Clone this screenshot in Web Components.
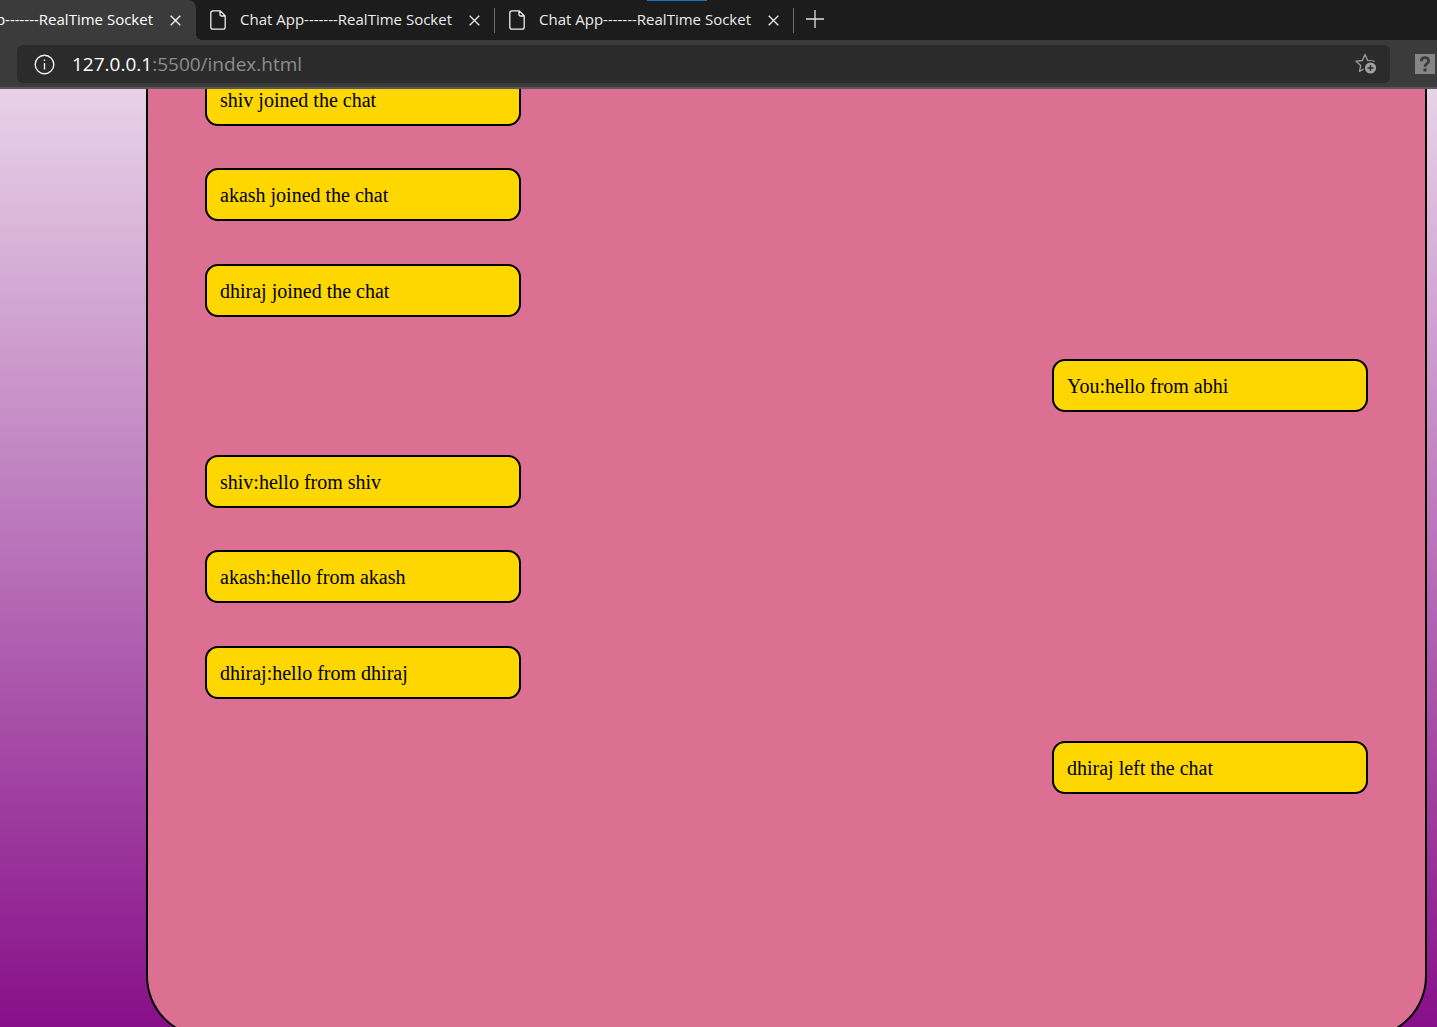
<!DOCTYPE html>
<html lang="en">
<head>
<meta charset="utf-8">
<title>Chat App-------RealTime Socket</title>
<style>
html, body { height: 100%; margin: 0; }
body { overflow: hidden; background: #1c1c1c; }
</style>
</head>
<body>
<app-window></app-window>
<script>
const define = (name, html) => {
  const t = document.createElement('template');
  t.innerHTML = html;
  customElements.define(name, class extends HTMLElement {
    constructor() {
      super();
      this.attachShadow({ mode: 'open' }).append(t.content.cloneNode(true));
    }
  });
};

define('browser-tab', `
<style>
:host { display: flex; align-items: center; flex: none; width: 299px; height: 40px; box-sizing: border-box; padding: 0 13px 0 14px; color: #ececec; }
:host([active]) { background: #3b3b3b; color: #fff; border-radius: 0 8px 0 0; width: 196px; padding: 0 12px 0 0; justify-content: flex-end; overflow: hidden; }
:host([active]) .page { display: none; }
:host([divided]) { background: linear-gradient(#6b6b6b, #6b6b6b) right center / 1px 25px no-repeat, radial-gradient(circle at 6px 0, transparent 6px, #3b3b3b 6px) left bottom / 6px 6px no-repeat; }
:host([divided]:nth-child(n+3)) { background: linear-gradient(#6b6b6b, #6b6b6b) right center / 1px 25px no-repeat; }
.page { flex: none; margin-right: 14px; }
a { flex: none; width: 213px; padding-bottom: 2px; color: inherit; text-decoration: none; white-space: nowrap; font-size: 15px; line-height: 20px; }
button { flex: none; display: grid; place-items: center; width: 18px; height: 18px; margin-left: 12px; padding: 0; border: 0; background: none; color: inherit; }
svg { display: block; fill: none; stroke: currentColor; }
</style>
<svg class="page" width="16" height="20" viewBox="0 0 16 20" stroke-width="1.3"><path d="M3 .8h7.2L15.2 5.8V17q0 2.2-2.2 2.2H3Q.8 19.2.8 17V3Q.8.8 3 .8ZM10 .8V4.500q0 1.500 1.500 1.500h3.700"/></svg>
<a href="#"><slot></slot></a>
<button aria-label="Close tab"><svg width="11" height="11" viewBox="0 0 11 11" stroke-width="1.3"><path d="m.7.7 9.6 9.6M10.3.7.7 10.3"/></svg></button>`);

define('tab-strip', `
<style>
:host { display: flex; height: 40px; background: linear-gradient(#1874b8, #1874b8) 47% 0 / 60px 1px no-repeat #1c1c1c; }
.new { width: 18px; height: 38px; margin-left: 12px; padding: 0; border: 0; background: none; color: #e0e0e0; }
svg { display: block; fill: none; stroke: currentColor; }
</style>
<slot></slot>
<button class="new" aria-label="New tab"><svg width="18" height="18" viewBox="0 0 18 18" stroke-width="1.3"><path d="M0 9h18M9 0v18"/></svg></button>`);

define('address-bar', `
<style>
:host { display: flex; align-items: center; height: 49px; box-sizing: border-box; padding: 1px 2px 0 17px; background: #3b3b3b; border-bottom: 2px solid #5a5557; }
.field { flex: 1; display: flex; align-items: center; height: 38px; box-sizing: border-box; padding: 0 13px 0 17px; border-radius: 6px; background: #2b2b2b; }
a { flex: 1; margin-left: 17px; color: #8d8d8d; text-decoration: none; font-size: 19px; line-height: 26px; }
b { font-weight: 400; color: #fff; }
button { display: block; padding: 0; border: 0; background: none; }
.ext { margin-left: 25px; }
svg { display: block; }
</style>
<div class="field">
<button aria-label="View site information"><svg width="21" height="21" viewBox="0 0 21 21" fill="none" stroke="#f0f0f0" stroke-width="1.4"><circle cx="10.5" cy="10.5" r="9.3"/><path d="M10.5 9v6.500M10.5 5.500v1.6"/></svg></button>
<a href="#"><b>127.0.0.1</b>:5500/index.html</a>
<button aria-label="Add to favorites"><svg width="23" height="22" viewBox="0 0 23 22"><path d="m11 1.500 2.700 6 6.300.7-4.700 4.200 1.200 6.100L11 15.400l-5.500 3.100 1.200-6.100L2 8.200l6.300-.7Z" fill="none" stroke="#989898" stroke-width="1.4" stroke-linejoin="round"/><circle cx="16.500" cy="15" r="7" fill="#2b2b2b"/><circle cx="16.500" cy="15" r="5.600" fill="#a0a0a0"/><path d="M13.500 15h6m-3-3v6" stroke="#2b2b2b" stroke-width="1.4"/></svg></button>
</div>
<button class="ext" aria-label="Extension"><svg width="20" height="20" viewBox="0 0 20 20"><path fill="#858585" d="M0 0h20v20H0z"/><path d="M6.300 7.200Q6.300 3.700 10 3.700T13.600 7Q13.600 8.500 11.800 9.700 10 10.800 10 12.800" fill="none" stroke="#3b3b3b" stroke-width="2.8"/><path fill="#3b3b3b" d="M8.500 14.500h3v3h-3z"/></svg></button>`);

define('chat-message', `
<style>
:host { display: block; box-sizing: border-box; width: 316px; align-self: flex-start; padding: 14px 13px 12px; border: 2px solid #000; border-radius: 13px; background: #ffd700; color: #000; font: 20px/23px "Liberation Serif", serif; }
:host(:nth-child(odd)) { margin-top: 1px; }
:host([side="right"]) { align-self: flex-end; }
</style>
<slot></slot>`);

define('chat-board', `
<style>
:host { display: flex; flex-direction: column; min-height: calc(100% + 11px); margin: 0 10px 0 146px; box-sizing: border-box; border: solid #000; border-width: 0 2px 2px; border-radius: 0 0 62px 62px; background: #db7093; padding: 0 57px 40px; }
.log { display: flex; flex-direction: column; gap: 42px; margin-top: -17px; }
</style>
<div class="log">
<chat-message>shiv joined the chat</chat-message>
<chat-message>akash joined the chat</chat-message>
<chat-message>dhiraj joined the chat</chat-message>
<chat-message side="right">You:hello from abhi</chat-message>
<chat-message>shiv:hello from shiv</chat-message>
<chat-message>akash:hello from akash</chat-message>
<chat-message>dhiraj:hello from dhiraj</chat-message>
<chat-message side="right">dhiraj left the chat</chat-message>
</div>`);

define('app-window', `
<style>
:host { display: flex; flex-direction: column; height: 100vh; font-family: "Open Sans", "Noto Sans", sans-serif; }
main { flex: 1; min-height: 0; overflow: hidden; background: linear-gradient(#e8d2e8, #870f88); }
</style>
<tab-strip>
<browser-tab active>Chat App-------RealTime Socket</browser-tab>
<browser-tab divided>Chat App-------RealTime Socket</browser-tab>
<browser-tab divided>Chat App-------RealTime Socket</browser-tab>
</tab-strip>
<address-bar></address-bar>
<main><chat-board></chat-board></main>`);
</script>
</body>
</html>
